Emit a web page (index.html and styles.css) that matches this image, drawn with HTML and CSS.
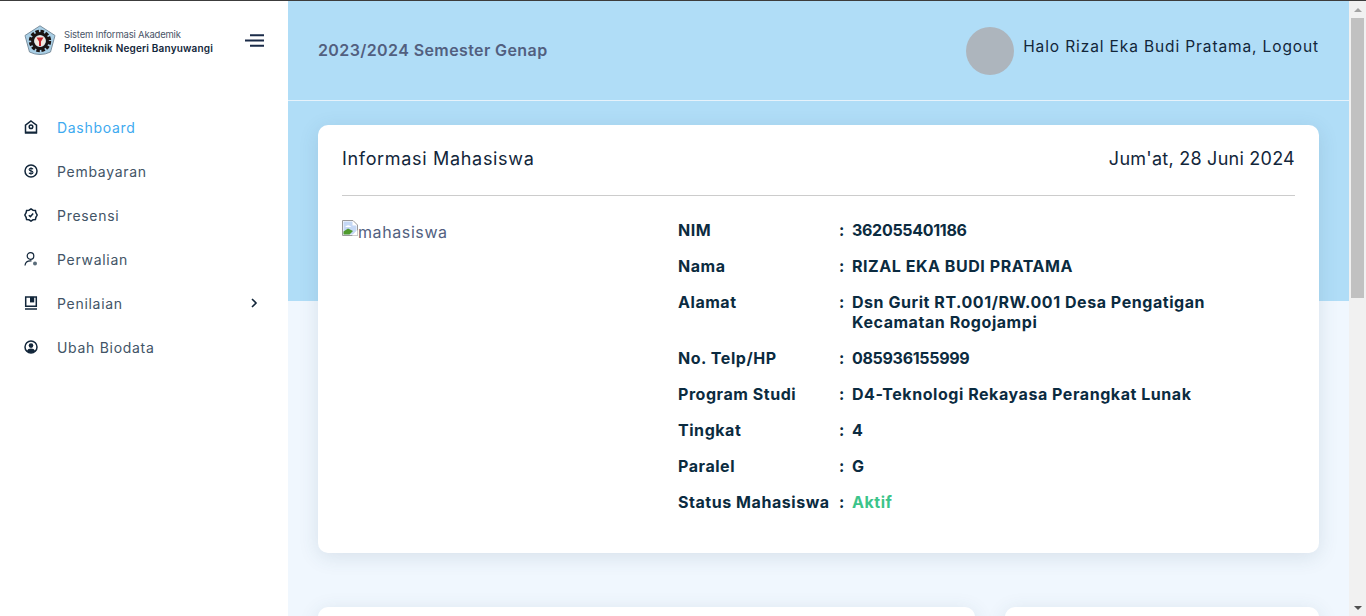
FILE: index.html
```html
<!DOCTYPE html>
<html lang="id">
<head>
    <meta charset="UTF-8">
    <meta name="viewport" content="width=device-width, initial-scale=1.0">
    <title>SIAKAD - Dashboard</title>
    <link rel="stylesheet" href="styles.css">
</head>
<body>
    <div class="top-edge"></div>
    <div class="window">
        <aside class="sidebar">
            <div class="brand">
                <svg class="brand-logo" viewBox="0 0 32 32">
                    <path d="M16 .8 L31 10.5 L26.5 27 Q16 32 5.5 27 L1 10.5 Z" fill="#a9cfe6" stroke="#7b8f9e" stroke-width="1"/>
                    <circle cx="16" cy="16" r="9.5" fill="none" stroke="#1b1413" stroke-width="3.4" stroke-dasharray="3.4 1.6"/>
                    <circle cx="16" cy="16" r="7.4" fill="none" stroke="#1b1413" stroke-width="3"/>
                    <circle cx="16" cy="16" r="5.6" fill="#f2e9df"/>
                    <path d="M12.5 12.5 H19.5 L17 16.5 V21 H15 V16.5 Z" fill="#c4242c"/>
                </svg>
                <div class="brand-text">
                    <span class="brand-top">Sistem Informasi Akademik</span>
                    <span class="brand-name">Politeknik Negeri Banyuwangi</span>
                </div>
                <svg class="burger" viewBox="0 0 19 13">
                    <path d="M5 1.2H19M0 6.5H19M5 11.8H19" stroke="#1a2b48" stroke-width="2"/>
                </svg>
            </div>
            <nav class="menu">
                <a class="menu-item active" href="#">
                    <svg class="menu-icon" viewBox="0 0 14 14"><path d="M7 1 L12.5 5.2 V12.8 H1.5 V5.2 Z" fill="none"/><circle cx="7" cy="6.8" r="1.8" fill="none"/><path d="M1 11.5 H13 V13.5 H1 Z" class="fill-dark"/></svg>
                    <span>Dashboard</span>
                </a>
                <a class="menu-item" href="#">
                    <svg class="menu-icon" viewBox="0 0 14 14"><circle cx="7" cy="7" r="6" fill="none"/><path d="M9 5.2 Q8.5 4.2 7 4.2 Q5.1 4.2 5.1 5.6 Q5.1 6.8 7 7 Q9 7.2 9 8.4 Q9 9.8 7 9.8 Q5.4 9.8 5 8.8 M7 3.2 V10.8" fill="none" stroke-width="1.1"/></svg>
                    <span>Pembayaran</span>
                </a>
                <a class="menu-item" href="#">
                    <svg class="menu-icon" viewBox="0 0 14 14"><path d="M7 .9 L9 2.2 L11.4 2.4 L11.9 4.7 L13.2 7 L11.9 9.3 L11.4 11.6 L9 11.8 L7 13.1 L5 11.8 L2.6 11.6 L2.1 9.3 L.8 7 L2.1 4.7 L2.6 2.4 L5 2.2 Z" fill="none"/><path d="M4.8 7.2 L6.4 8.6 L9.2 5.6" fill="none"/></svg>
                    <span>Presensi</span>
                </a>
                <a class="menu-item" href="#">
                    <svg class="menu-icon" viewBox="0 0 14 14"><circle cx="6.5" cy="4" r="3.3" fill="none" stroke-width="1.2"/><path d="M1 13.5 Q1.4 8.8 6.5 8.8 H7.5" fill="none" stroke-width="1.2"/><circle cx="11" cy="11.4" r="2" class="fill-grey"/></svg>
                    <span>Perwalian</span>
                </a>
                <a class="menu-item" href="#">
                    <svg class="menu-icon" viewBox="0 0 14 14"><path d="M1.7 .9 H12.3 V10.2 H1.7 Z" fill="none"/><path d="M6 .9 H10.2 V6.4 H6 Z" class="fill-dark"/><path d="M1 13 H13" fill="none"/></svg>
                    <span>Penilaian</span>
                    <svg class="menu-arrow" viewBox="0 0 8 10"><path d="M2 1 L6 5 L2 9" fill="none"/></svg>
                </a>
                <a class="menu-item" href="#">
                    <svg class="menu-icon" viewBox="0 0 14 14"><circle cx="7" cy="7" r="6" fill="none"/><circle cx="7" cy="5.6" r="2.3" class="fill-dark"/><path d="M2.8 11 Q3.8 8.6 7 8.6 Q10.2 8.6 11.2 11 Q9.5 13 7 13 Q4.5 13 2.8 11 Z" class="fill-dark"/></svg>
                    <span>Ubah Biodata</span>
                </a>
            </nav>
        </aside>

        <main class="content">
            <header class="topbar">
                <h2 class="semester">2023/2024 Semester Genap</h2>
                <div class="user">
                    <div class="avatar"></div>
                    <div class="user-name">Halo Rizal Eka Budi Pratama, Logout</div>
                </div>
            </header>

            <section class="card info-card">
                <div class="card-head">
                    <h3>Informasi Mahasiswa</h3>
                    <span class="card-date">Jum'at, 28 Juni 2024</span>
                </div>
                <div class="card-body">
                    <div class="photo">
                        <svg class="broken-img" viewBox="0 0 16 16">
                            <path d="M.5 .5 H11 L15.5 5 V15.5 H.5 Z" fill="#fff" stroke="#9a9a9a"/>
                            <path d="M1.5 1.5 H10.5 V5.5 H14.5 V11 L11 14.5 H1.5 Z" fill="#c5d8f5"/>
                            <path d="M1.5 14.5 V11.5 L6 8.5 L11 11 L7.5 14.5 Z" fill="#4f9a2c"/>
                            <path d="M3 7 Q6 3.6 9.5 7 Z" fill="#fff"/>
                            <path d="M15.5 10 L10 15.5 H15.5 Z" fill="#fff"/>
                        </svg><span>mahasiswa</span>
                    </div>
                    <table class="info-table">
                        <tr><th>NIM</th><td class="sep">:</td><td class="num">362055401186</td></tr>
                        <tr><th>Nama</th><td class="sep">:</td><td>RIZAL EKA BUDI PRATAMA</td></tr>
                        <tr><th>Alamat</th><td class="sep">:</td><td>Dsn Gurit RT.001/RW.001 Desa Pengatigan<br>Kecamatan Rogojampi</td></tr>
                        <tr><th>No. Telp/HP</th><td class="sep">:</td><td class="num">085936155999</td></tr>
                        <tr><th>Program Studi</th><td class="sep">:</td><td>D4-Teknologi Rekayasa Perangkat Lunak</td></tr>
                        <tr><th>Tingkat</th><td class="sep">:</td><td>4</td></tr>
                        <tr><th>Paralel</th><td class="sep">:</td><td>G</td></tr>
                        <tr><th>Status Mahasiswa</th><td class="sep">:</td><td class="status">Aktif</td></tr>
                    </table>
                </div>
            </section>

            <div class="lower-row">
                <section class="card lower-main"></section>
                <section class="card lower-side"></section>
            </div>
        </main>

        <div class="scrollbar">
            <div class="scroll-btn"><svg viewBox="0 0 8 4"><path d="M0 4 L4 0 L8 4 Z" fill="#a3a3a3"/></svg></div>
            <div class="scroll-track"><div class="scroll-thumb"></div></div>
            <div class="scroll-btn"><svg viewBox="0 0 8 4"><path d="M0 0 L8 0 L4 4 Z" fill="#505050"/></svg></div>
        </div>
    </div>
</body>
</html>
```

FILE: styles.css
```css
* {
    margin: 0;
    padding: 0;
    box-sizing: border-box;
    font-family: 'Inter', 'Liberation Sans', sans-serif;
}

:root {
    --navy: #0b2b40;
    --sky: #b0ddf7;
    --page-bg: #f0f7fe;
    --active: #3eaaf0;
}

html, body {
    height: 616px;
    overflow: hidden;
}

body {
    background: var(--page-bg);
    color: var(--navy);
}

.top-edge {
    height: 1px;
    background: #3c3c3c;
}

.window {
    display: flex;
    height: 615px;
    overflow: hidden;
}

/* sidebar */
.sidebar {
    width: 288px;
    flex-shrink: 0;
    background: #fff;
}

.brand {
    display: flex;
    align-items: center;
    height: 79px;
    padding: 0 24px;
}

.brand-logo {
    width: 32px;
    height: 32px;
    margin-right: 8px;
    flex-shrink: 0;
}

.brand-text {
    display: flex;
    flex-direction: column;
    gap: 1px;
    flex: 1;
    padding-top: 1px;
}

.brand-top {
    font-size: 9.5px;
    line-height: 13px;
    color: #4a5568;
    letter-spacing: -.2px;
}

.brand-name {
    font-size: 10px;
    line-height: 13px;
    font-weight: 600;
    color: #12263a;
    letter-spacing: .18px;
    white-space: nowrap;
}

.burger {
    width: 19px;
    height: 13px;
    margin-bottom: 1px;
    flex-shrink: 0;
}

.menu {
    padding-top: 25px;
}

.menu-item {
    display: flex;
    align-items: center;
    height: 44px;
    padding: 0 30px 0 24px;
    color: #425466;
    font-size: 14px;
    letter-spacing: .7px;
    text-decoration: none;
}

.menu-item.active {
    color: var(--active);
}

.menu-icon {
    width: 14px;
    height: 14px;
    margin-right: 19px;
    flex-shrink: 0;
    stroke: #12263a;
    stroke-width: 1.5;
}

.fill-dark {
    fill: #12263a;
    stroke: none;
}

.fill-grey {
    fill: #5a6c7a;
    stroke: none;
}

.menu-arrow {
    width: 8px;
    height: 10px;
    margin-left: auto;
    stroke: #12263a;
    stroke-width: 1.6;
}

/* main column */
.content {
    flex: 1;
    min-width: 0;
    padding: 0 30px;
    background: linear-gradient(var(--sky) 300px, var(--page-bg) 300px);
}

.topbar {
    display: flex;
    align-items: center;
    justify-content: space-between;
    height: 100px;
    margin: 0 -30px;
    padding: 0 30px;
    border-bottom: 1px solid #e6f2fb;
}

.semester {
    margin-bottom: 2px;
    font-size: 16px;
    font-weight: 600;
    color: #525f7f;
    letter-spacing: .4px;
}

.user {
    display: flex;
    align-items: flex-start;
    gap: 9px;
}

.avatar {
    width: 48px;
    height: 48px;
    border-radius: 50%;
    background: #adb5bd;
}

.user-name {
    margin-top: 9px;
    font-size: 15.5px;
    line-height: 22px;
    color: #12263a;
    letter-spacing: .88px;
}

/* cards */
.card {
    background: #fff;
    border-radius: 10px;
    box-shadow: 0 4px 20px rgba(50, 80, 100, .13);
}

.info-card {
    height: 428px;
    margin-top: 24px;
    padding: 0 24px;
}

.card-head {
    display: flex;
    justify-content: space-between;
    align-items: center;
    height: 71px;
    padding-bottom: 3px;
    border-bottom: 1px solid #ccc;
    font-size: 18px;
    color: #12263a;
}

.card-head h3 {
    font-size: 18px;
    font-weight: 400;
    letter-spacing: .68px;
}

.card-date {
    letter-spacing: .25px;
}

.card-body {
    display: flex;
    padding-top: 16px;
}

.photo {
    width: 336px;
    flex-shrink: 0;
    display: flex;
    align-items: flex-end;
    height: 30px;
    font-size: 16px;
    color: #525f7f;
    letter-spacing: .6px;
}

.broken-img {
    width: 16px;
    height: 16px;
    margin-bottom: 6px;
}

.info-table {
    border-collapse: collapse;
    font-size: 16px;
    color: var(--navy);
    line-height: 20px;
    letter-spacing: .55px;
}

.info-table th,
.info-table td {
    padding: 8px 0;
    text-align: left;
    vertical-align: top;
    font-weight: 700;
}

.info-table th {
    width: 161px;
}

.info-table .sep {
    width: 13px;
}

.info-table .num {
    letter-spacing: -.3px;
}

.info-table .status {
    color: #3cc48a;
}

.lower-row {
    display: flex;
    gap: 30px;
    margin-top: 54px;
}

.lower-main {
    flex: 1;
    height: 100px;
}

.lower-side {
    width: 314px;
    height: 100px;
}

/* scrollbar */
.scrollbar {
    width: 17px;
    flex-shrink: 0;
    display: flex;
    flex-direction: column;
    background: #f1f1f1;
}

.scroll-btn {
    height: 17px;
    display: flex;
    align-items: center;
    justify-content: center;
}

.scroll-btn svg {
    width: 8px;
    height: 4px;
}

.scroll-track {
    flex: 1;
    padding: 0 2px;
}

.scroll-thumb {
    height: 280px;
    background: #c1c1c1;
}
```
